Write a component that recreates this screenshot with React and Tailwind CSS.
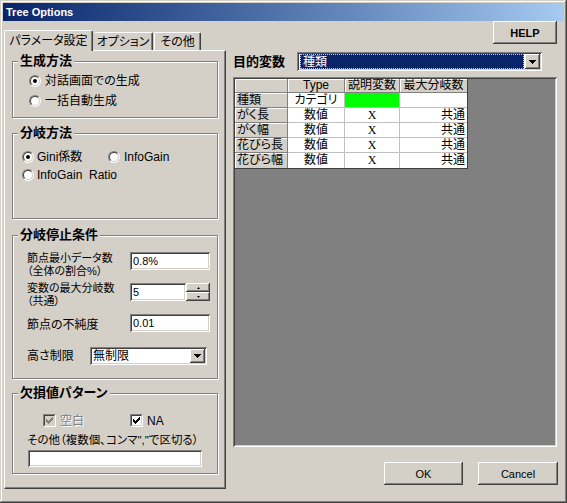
import React from 'react';

const raised =
  'bg-[#d4d0c8] shadow-[inset_-1px_-1px_#404040,inset_1px_1px_#ffffff,inset_-2px_-2px_#808080,inset_2px_2px_#d4d0c8]';
const sunken =
  'shadow-[inset_1px_1px_#808080,inset_-1px_-1px_#ffffff,inset_2px_2px_#404040,inset_-2px_-2px_#d4d0c8]';

const checkRuns = [
  [6, 0, 1], [5, 1, 2], [0, 2, 1], [4, 2, 3], [0, 3, 2], [3, 3, 3], [0, 4, 5], [1, 5, 3], [2, 6, 1],
];

function Radio({ checked }) {
  return (
    <span className="w-[12px] h-[12px] shrink-0 rounded-full border border-t-[#808080] border-l-[#808080] border-b-white border-r-white flex">
      <span className="flex-1 rounded-full border border-t-[#404040] border-l-[#404040] border-b-[#d4d0c8] border-r-[#d4d0c8] bg-white flex items-center justify-center">
        {checked && <span className="w-[4px] h-[4px] rounded-full bg-black" />}
      </span>
    </span>
  );
}

function Check({ disabled }) {
  return (
    <span className="w-[13px] h-[13px] shrink-0 border border-t-[#808080] border-l-[#808080] border-b-white border-r-white flex">
      <span
        className={
          disabled
            ? 'flex-1 border border-t-[#404040] border-l-[#404040] border-b-[#d4d0c8] border-r-[#d4d0c8] bg-[#d4d0c8] flex items-center justify-center'
            : 'flex-1 border border-t-[#404040] border-l-[#404040] border-b-[#d4d0c8] border-r-[#d4d0c8] bg-white flex items-center justify-center'
        }
      >
        <svg width="7" height="7" viewBox="0 0 7 7" shapeRendering="crispEdges">
          {checkRuns.map(([x, y, w], i) => (
            <rect key={i} x={x} y={y} width={w} height={1} fill={disabled ? '#808080' : '#000'} />
          ))}
        </svg>
      </span>
    </span>
  );
}

function DropButton({ className = '' }) {
  return (
    <span className={`${raised} flex items-center justify-center ${className}`}>
      <svg width="7" height="4" viewBox="0 0 7 4" shapeRendering="crispEdges">
        <polygon points="0,0 7,0 3.5,4" fill="#000" />
      </svg>
    </span>
  );
}

function Group({ title, className = '', children }) {
  return (
    <fieldset
      className={`border border-[#808080] shadow-[inset_1px_1px_#ffffff,1px_1px_#ffffff] min-w-0 ${className}`}
    >
      <legend className="ml-[5px] px-[2px] bg-[#d4d0c8] font-bold text-[13px] leading-[12px]">{title}</legend>
      {children}
    </fieldset>
  );
}

function TextBox({ value, className = '' }) {
  return (
    <div className={`bg-white ${sunken} h-[18px] flex items-center pl-[3px] text-[11px] ${className}`}>{value}</div>
  );
}

const rows = [
  ['種類', 'カテゴリ', null, ''],
  ['がく長', '数値', 'X', '共通'],
  ['がく幅', '数値', 'X', '共通'],
  ['花びら長', '数値', 'X', '共通'],
  ['花びら幅', '数値', 'X', '共通'],
];

const fixedCell =
  'bg-[#d4d0c8] border-r border-b border-[#808080] shadow-[inset_1px_1px_#ffffff] px-[2px] whitespace-nowrap overflow-hidden';
const dataCell = 'bg-white border-r border-b border-[#c0c0c0] px-[2px] whitespace-nowrap overflow-hidden';

export default function App() {
  return (
    <div className="w-[567px] h-[503px] bg-[#d4d0c8] p-[3px] flex flex-col overflow-hidden shadow-[inset_-1px_-1px_#404040,inset_1px_1px_#d4d0c8,inset_-2px_-2px_#808080,inset_2px_2px_#ffffff] text-black text-[12px] leading-[14px] [font-family:'Liberation_Sans','Noto_Sans_CJK_JP',sans-serif] [font-feature-settings:'palt']">
      <div className="h-[18px] shrink-0 flex items-center pl-[3px] bg-linear-to-r from-[#0a246a] to-[#a6caf0] text-white font-bold text-[11px]">
        Tree Options
      </div>

      <div className="flex flex-1 min-h-0">
        {/* left: tab control */}
        <div className="w-[222px] ml-[1px] mt-[9px] flex flex-col shrink-0">
          <div className="flex items-end h-[20px] relative z-10">
            <div className="w-[89px] h-[21px] -mb-px bg-[#d4d0c8] border-t border-l border-r border-t-white border-l-white border-r-[#404040] rounded-t-[2px] shadow-[inset_-1px_0_#808080] flex items-center justify-center">
              パラメータ設定
            </div>
            <div className="w-[59px] ml-[1px] h-[18px] bg-[#d4d0c8] border-t border-r border-t-white border-r-[#404040] rounded-t-[2px] shadow-[inset_-1px_0_#808080] flex items-center justify-center">
              オプション
            </div>
            <div className="w-[47px] ml-[1px] h-[18px] bg-[#d4d0c8] border-t border-l border-r border-t-white border-l-white border-r-[#404040] rounded-t-[2px] shadow-[inset_-1px_0_#808080] flex items-center justify-center">
              その他
            </div>
          </div>

          <div className="h-[439px] border border-t-white border-l-white border-r-[#404040] border-b-[#404040] shadow-[inset_-1px_-1px_#808080] px-[7px] flex flex-col">
            <Group title="生成方法" className="mt-[4px] h-[63px]">
              <div className="pl-[16px] pt-[6px] flex flex-col gap-[4px]">
                <label className="h-[16px] flex items-center gap-[4px]">
                  <Radio checked />
                  対話画面での生成
                </label>
                <label className="h-[16px] flex items-center gap-[4px]">
                  <Radio />
                  一括自動生成
                </label>
              </div>
            </Group>

            <Group title="分岐方法" className="mt-[9px] h-[92px]">
              <div className="pl-[9px] pt-[10px] flex flex-col gap-[2px]">
                <div className="h-[16px] flex items-center">
                  <label className="w-[86px] flex items-center gap-[3px]">
                    <Radio checked />
                    Gini係数
                  </label>
                  <label className="flex items-center gap-[4px]">
                    <Radio />
                    InfoGain
                  </label>
                </div>
                <label className="h-[16px] flex items-center gap-[3px]">
                  <Radio />
                  {'InfoGain\u00a0\u00a0Ratio'}
                </label>
              </div>
            </Group>

            <Group title="分岐停止条件" className="mt-[10px] h-[150px]">
              <div className="pl-[14px] pt-[11px] flex flex-col">
                <div className="h-[26px] flex items-start">
                  <div className="w-[103px] text-[11px] leading-[13px]">
                    <div>節点最小データ数</div>
                    <div>（全体の割合%）</div>
                  </div>
                  <TextBox value="0.8%" className="w-[80px]" />
                </div>
                <div className="mt-[4px] h-[26px] flex items-start">
                  <div className="w-[103px] text-[11px] leading-[13px]">
                    <div>変数の最大分岐数</div>
                    <div>（共通）</div>
                  </div>
                  <TextBox value="5" className="w-[56px] mt-[1px]" />
                  <div className="w-[24px] h-[18px] mt-[1px] flex flex-col">
                    <span className={`${raised} h-[9px] flex items-center justify-center`}>
                      <svg width="3" height="2" viewBox="0 0 3 2">
                        <polygon points="1.5,0 3,2 0,2" fill="#000" />
                      </svg>
                    </span>
                    <span className={`${raised} h-[9px] flex items-center justify-center`}>
                      <svg width="3" height="2" viewBox="0 0 3 2">
                        <polygon points="0,0 3,0 1.5,2" fill="#000" />
                      </svg>
                    </span>
                  </div>
                </div>
                <div className="mt-[6px] h-[18px] flex items-center">
                  <div className="w-[103px] pt-[3px]">節点の不純度</div>
                  <TextBox value="0.01" className="w-[80px]" />
                </div>
                <div className="mt-[15px] h-[18px] flex items-center">
                  <div className="w-[63px]">高さ制限</div>
                  <div className={`bg-white ${sunken} w-[117px] h-[18px] flex items-center pl-[3px] pr-[2px]`}>
                    <span className="flex-1">無制限</span>
                    <DropButton className="w-[15px] h-[14px]" />
                  </div>
                </div>
              </div>
            </Group>

            <Group title="欠損値パターン" className="mt-[8px] h-[87px]">
              <div className="pl-[30px] pt-[15px] flex items-center h-[28px]">
                <label className="w-[87px] flex items-center gap-[4px] text-[#808080] [text-shadow:1px_1px_#ffffff]">
                  <Check disabled />
                  空白
                </label>
                <label className="flex items-center gap-[4px]">
                  <Check />
                  NA
                </label>
              </div>
              <div className="pl-[14px] mt-[7px] leading-[12px] text-[11.5px] whitespace-nowrap">
                その他（複数個、コンマ&quot;,&quot;で区切る）
              </div>
              <div className="pl-[15px] mt-[4px]">
                <div className={`bg-white ${sunken} w-[174px] h-[17px]`} />
              </div>
            </Group>
          </div>
        </div>

        {/* right side */}
        <div className="flex-1 ml-[6px] mr-[7px] flex flex-col">
          <button className={`${raised} self-end w-[64px] h-[23px] font-bold text-[11px]`}>HELP</button>

          <div className="mt-[8px] h-[19px] flex items-center">
            <div className="w-[65px] pl-[1px] font-bold text-[13px]">目的変数</div>
            <div className={`bg-white ${sunken} w-[245px] h-[19px] flex items-center pl-[3px] pr-[2px] py-[2px]`}>
              <span className="flex-1 h-[15px] bg-[#0a246a] text-white border border-dotted border-[#c8c8ff] flex items-center pl-[2px]">
                種類
              </span>
              <DropButton className="w-[15px] h-[15px] ml-[1px]" />
            </div>
          </div>

          <div className={`mt-[6px] ml-[1px] h-[370px] bg-[#808080] ${sunken} p-[2px]`}>
            <div className="grid grid-cols-[53px_57px_55px_67px] w-max border-r border-b border-[#404040]">
              <div className={`${fixedCell} h-[14px]`} />
              <div className={`${fixedCell} h-[14px] text-center leading-[13px]`}>Type</div>
              <div className={`${fixedCell} h-[14px] text-center leading-[13px]`}>説明変数</div>
              <div className={`${fixedCell} h-[14px] text-center leading-[13px] border-r-0`}>最大分岐数</div>
              {rows.map(([name, type, ex, mx], i) => (
                <React.Fragment key={i}>
                  <div className={`${fixedCell} h-[15px] leading-[14px] ${i === rows.length - 1 ? 'border-b-0' : ''}`}>
                    {name}
                  </div>
                  <div className={`${dataCell} h-[15px] leading-[14px] text-center ${i === rows.length - 1 ? 'border-b-0' : ''}`}>
                    {type}
                  </div>
                  {ex === null ? (
                    <div className="bg-[#00ff00] border-r border-b border-[#c0c0c0] h-[15px]" />
                  ) : (
                    <div
                      className={`${dataCell} h-[15px] leading-[14px] text-center [font-family:'Liberation_Serif',serif] ${i === rows.length - 1 ? 'border-b-0' : ''}`}
                    >
                      {ex}
                    </div>
                  )}
                  <div className={`${dataCell} h-[15px] leading-[14px] text-right border-r-0 ${i === rows.length - 1 ? 'border-b-0' : ''}`}>
                    {mx}
                  </div>
                </React.Fragment>
              ))}
            </div>
          </div>

          <div className="mt-[15px] flex justify-end gap-[15px] -mr-[1px]">
            <button className={`${raised} w-[79px] h-[23px] text-[11px]`}>OK</button>
            <button className={`${raised} w-[80px] h-[23px] text-[11px]`}>Cancel</button>
          </div>
        </div>
      </div>
    </div>
  );
}
